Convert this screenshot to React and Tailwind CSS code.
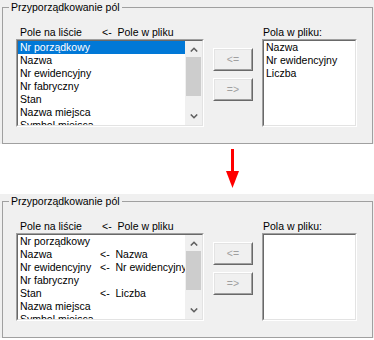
const beforeRows = [
    ['Nr porządkowy', ''],
    ['Nazwa', ''],
    ['Nr ewidencyjny', ''],
    ['Nr fabryczny', ''],
    ['Stan', ''],
    ['Nazwa miejsca', ''],
    ['Symbol miejsca', ''],
];

const afterRows = [
    ['Nr porządkowy', ''],
    ['Nazwa', 'Nazwa'],
    ['Nr ewidencyjny', 'Nr ewidencyjny'],
    ['Nr fabryczny', ''],
    ['Stan', 'Liczba'],
    ['Nazwa miejsca', ''],
    ['Symbol miejsca', ''],
];

function Sunken({ className, children }) {
    return (
        <div className={`border border-t-[#a0a0a0] border-l-[#a0a0a0] border-b-white border-r-white ${className}`}>
            <div className="h-full border border-t-[#696969] border-l-[#696969] border-b-[#e3e3e3] border-r-[#e3e3e3] bg-white overflow-hidden">
                {children}
            </div>
        </div>
    );
}

function Chevron({ up }) {
    return (
        <svg width="8" height="5" viewBox="0 0 8 5">
            <polyline
                points={up ? '0.8,4.5 4,1.3 7.2,4.5' : '0.8,0.5 4,3.7 7.2,0.5'}
                fill="none"
                stroke="#606060"
                strokeWidth="1.6"
            />
        </svg>
    );
}

function Scrollbar() {
    return (
        <div className="flex w-[17px] shrink-0 flex-col bg-[#f0f0f0]">
            <div className="flex h-[16px] items-center justify-center">
                <Chevron up />
            </div>
            <div className="mx-[1px] h-[39px] bg-[#cdcdcd]" />
            <div className="h-[12px]" />
            <div className="flex h-[17px] items-center justify-center">
                <Chevron />
            </div>
        </div>
    );
}

function WinButton({ label }) {
    return (
        <div className="h-[23px] w-[40px] border border-t-white border-l-white border-b-[#696969] border-r-[#696969]">
            <div className="flex h-full items-center justify-center border border-t-[#e3e3e3] border-l-[#e3e3e3] border-b-[#a0a0a0] border-r-[#a0a0a0] bg-[#f0f0f0] text-[#a0a0a0]">
                {label}
            </div>
        </div>
    );
}

function MappingPanel({ rows, selected, fileFields }) {
    return (
        <div className="h-[144px] bg-[#f0f0f0] pt-[1px] pl-[2px] pr-[1px]">
            <fieldset className="h-[143px] border border-[#a0a0a0]">
                <legend className="ml-[6px] px-[2px] leading-[13px]">Przyporządkowanie pól</legend>
                <div className="flex items-start pt-[12px] pl-[13px]">
                    <div className="w-[188px]">
                        <div className="flex h-[13px] pl-[4px] leading-[13px]">
                            <span className="w-[82px]">Pole na liście</span>
                            <span className="whitespace-pre">{'<-  Pole w pliku'}</span>
                        </div>
                        <Sunken className="h-[88px]">
                            <div className="flex h-full">
                                <div className="min-w-0 flex-1 overflow-hidden">
                                    {rows.map(([name, mapped], i) => (
                                        <div
                                            key={name}
                                            className={`flex h-[13px] whitespace-nowrap pl-[2px] leading-[13px] ${
                                                i === selected ? 'bg-[#0078d7] text-white' : ''
                                            }`}
                                        >
                                            <span className="w-[80px] shrink-0">{name}</span>
                                            {mapped ? <span className="whitespace-pre">{`<-  ${mapped}`}</span> : null}
                                        </div>
                                    ))}
                                </div>
                                <Scrollbar />
                            </div>
                        </Sunken>
                    </div>
                    <div className="ml-[9px] flex flex-col gap-[7px] pt-[22px]">
                        <WinButton label="<=" />
                        <WinButton label="=>" />
                    </div>
                    <div className="ml-[9px] w-[95px]">
                        <div className="h-[13px] pl-[1px] leading-[13px]">Pola w pliku:</div>
                        <Sunken className="h-[88px]">
                            <div className="pl-[2px]">
                                {fileFields.map((f) => (
                                    <div key={f} className="h-[13px] leading-[13px]">{f}</div>
                                ))}
                            </div>
                        </Sunken>
                    </div>
                </div>
            </fieldset>
        </div>
    );
}

export default function App() {
    return (
        <div className="h-[340px] w-[374px] bg-white font-['Liberation_Sans',Arial,sans-serif] text-[10.5px] text-black">
            <MappingPanel rows={beforeRows} selected={0} fileFields={['Nazwa', 'Nr ewidencyjny', 'Liczba']} />
            <div className="h-[50px] pt-[5px] pl-[225px]">
                <svg width="15" height="40" viewBox="0 0 15 40">
                    <rect x="6" y="0" width="3" height="23" fill="#ff0000" />
                    <polygon points="1,22 14,22 7.5,39" fill="#ff0000" />
                </svg>
            </div>
            <MappingPanel rows={afterRows} selected={-1} fileFields={[]} />
        </div>
    );
}
